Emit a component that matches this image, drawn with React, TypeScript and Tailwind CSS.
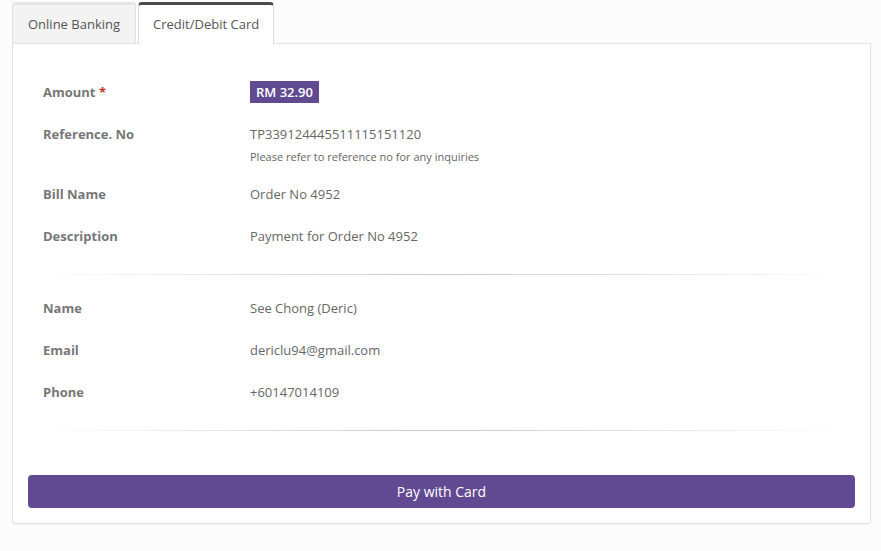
export default function App() {
  const font = { fontFamily: '"Open Sans", "Noto Sans", sans-serif' };

  const Row = ({ label, children, req }: { label: string; children: React.ReactNode; req?: boolean }) => (
    <div className="flex text-[13px] leading-5">
      <div className="w-[222px] shrink-0 pl-[15px] font-bold text-[#777]">
        {label}
        {req && <span className="text-[#c9302c]"> *</span>}
      </div>
      <div className="text-[#666]">{children}</div>
    </div>
  );

  const Hr = ({ className }: { className: string }) => (
    <div className={`h-px mx-[6px] bg-gradient-to-r from-transparent via-[#c8c8c8] to-transparent ${className}`} />
  );

  return (
    <div className="min-h-[551px] bg-[#fcfcfc] pt-[2px] pl-[12px] pr-[10px]" style={font}>
      {/* tabs */}
      <div className="flex gap-[2px] items-end h-[41px]">
        <div className="h-[41px] pt-[1px] px-[15px] flex items-center bg-[#f3f3f3] border-t-[3px] border-x border-t-[#e6e6e6] border-x-[#e2e2e2] rounded-t-[3px] text-[13px] text-[#555]">
          Online Banking
        </div>
        <div className="relative z-10 h-[42px] -mb-px px-[14px] flex items-center bg-white border-t-[3px] border-x border-t-[#4a4a4a] border-x-[#dcdcdc] rounded-t-[4px] text-[13px] text-[#555]">
          Credit/Debit Card
        </div>
      </div>

      {/* panel */}
      <div className="bg-white border border-[#e2e2e2] rounded-b-[3px] shadow-[0_1px_2px_rgba(0,0,0,0.04)] px-[15px] pt-[38px] pb-[15px]">
        <div className="mb-[22px]">
          <Row label="Amount" req>
            <span className="inline-block bg-[#624a92] text-white font-semibold px-[6px] leading-[22px] -my-px">RM 32.90</span>
          </Row>
        </div>
        <div className="mb-[19px]">
          <Row label="Reference. No">
            <div>TP339124445511115151120</div>
            <div className="mt-[5px] text-[11px] leading-4 text-[#666]">Please refer to reference no for any inquiries</div>
          </Row>
        </div>
        <div className="mb-[22px]">
          <Row label="Bill Name">Order No 4952</Row>
        </div>
        <Row label="Description">Payment for Order No 4952</Row>

        <Hr className="mt-[28px] mb-[23px]" />

        <div className="flex flex-col gap-[22px]">
          <Row label="Name">See Chong (Deric)</Row>
          <Row label="Email">dericlu94@gmail.com</Row>
          <Row label="Phone">+60147014109</Row>
        </div>

        <Hr className="mt-[28px] mb-[44px]" />

        <button className="w-full h-[33px] rounded-[4px] bg-[#624a92] text-white text-[14px]">Pay with Card</button>
      </div>
    </div>
  );
}
